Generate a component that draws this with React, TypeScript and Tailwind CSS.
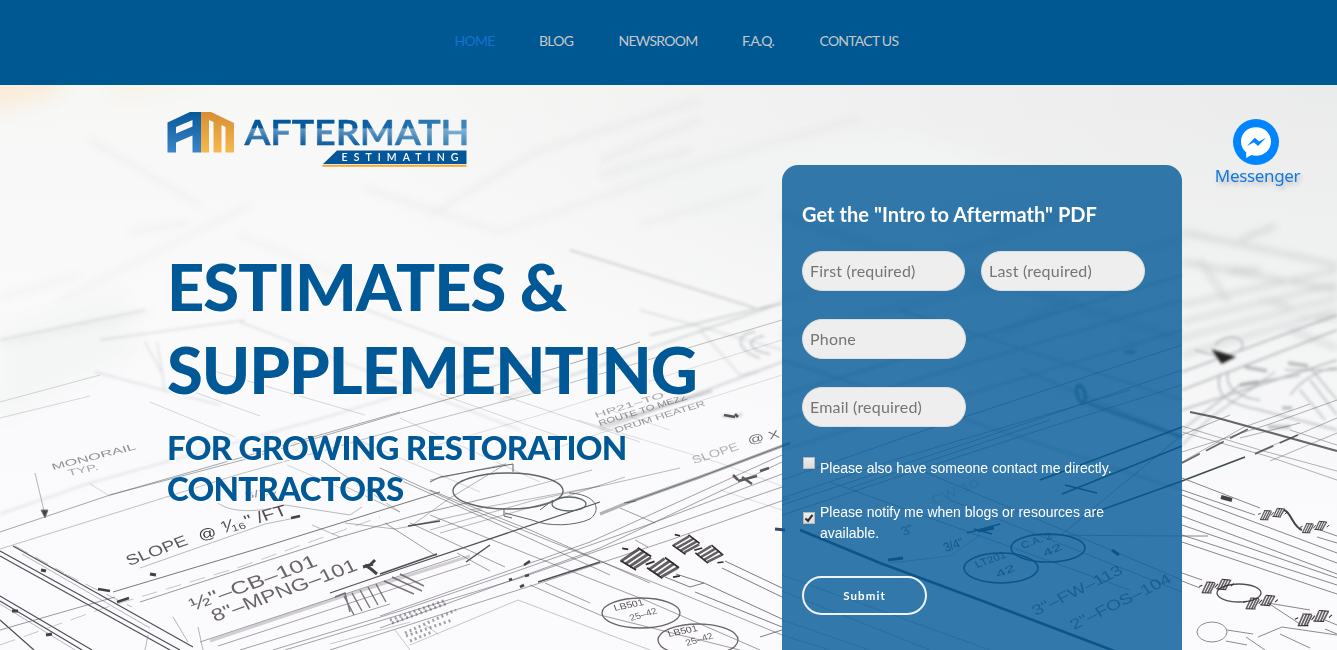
import React from "react";

const navItems = ["HOME", "BLOG", "NEWSROOM", "F.A.Q.", "CONTACT US"];
const navSpots = ["w-[39.5px]", "w-[34.5px]", "w-[78.5px]", "w-[32.5px]", "w-[81px]"];

function Label({ x, y, r, s, w, children, o = 0.6 }: { x: number; y: number; r: number; s: number; w: number; o?: number; children: string }) {
  return (
    <text
      transform={`translate(${x} ${y}) rotate(${r}) skewX(8)`}
      fontSize={s}
      textLength={w}
      lengthAdjust="spacingAndGlyphs"
      fill="#2b2429"
      opacity={o}
    >
      {children}
    </text>
  );
}

function Valve({ x, y, r = 24, k = 1 }: { x: number; y: number; r?: number; k?: number }) {
  return (
    <g transform={`translate(${x} ${y}) rotate(${r}) scale(${k})`} fill="none" stroke="#322c32">
      <path d="M-24 6L-14 -8M-20 7L-9 -8M-16 8L-5 -7M-12 8L-2 -5M0 5L9 -8M4 6L14 -8M8 7L18 -7M12 7L22 -5" strokeWidth="2.4" opacity=".75" />
      <path d="M-25 6L-10 9M-15 -9L-2 -6M-2 4L13 8M9 -9L23 -5M-27 -4L-22 -5M-4 2L2 -3M21 4L26 1" strokeWidth="1.5" />
    </g>
  );
}

function Blueprint() {
  return (
    <svg className="absolute inset-0 h-full w-full" viewBox="0 85 1337 565" preserveAspectRatio="none" fontFamily="'Liberation Sans', sans-serif" aria-hidden="true">
      <defs>
        <linearGradient id="paper" x1="0" y1="0" x2="0" y2="1">
          <stop offset="0" stopColor="#f7f7f6" />
          <stop offset=".4" stopColor="#fafafb" />
          <stop offset="1" stopColor="#fbfafd" />
        </linearGradient>
        <radialGradient id="shade" cx="1" cy="0" r=".75">
          <stop offset="0" stopColor="#dadddc" stopOpacity=".45" />
          <stop offset=".4" stopColor="#dadddc" stopOpacity=".3" />
          <stop offset="1" stopColor="#d9dddb" stopOpacity="0" />
        </radialGradient>
        <filter id="b12" x="-30%" y="-50%" width="160%" height="200%"><feGaussianBlur stdDeviation="10" /></filter>
        <filter id="b4" x="-10%" y="-10%" width="120%" height="120%"><feGaussianBlur stdDeviation="3.5" /></filter>
        <filter id="b2" x="-5%" y="-5%" width="110%" height="110%"><feGaussianBlur stdDeviation="1.4" /></filter>
        <filter id="b1" x="-5%" y="-5%" width="110%" height="110%"><feGaussianBlur stdDeviation=".7" /></filter>
      </defs>
      <rect y="85" width="1337" height="565" fill="url(#paper)" />
      <rect y="85" width="1337" height="565" fill="url(#shade)" />
      <g filter="url(#b12)">
        <path d="M-20 70H62V92L-20 114Z" fill="#f9ecd8" />
        <path d="M105 75H230L120 96Z" fill="#f7f1e4" />
        <path d="M0 330L120 290L140 350L0 420Z" fill="#f3f4f4" opacity=".8" />
        <path d="M600 170L900 130L1100 190L760 230Z" fill="#f2f3f3" />
      </g>

      <g filter="url(#b4)" fill="none" stroke="#858b8a" strokeWidth="3">
        <path d="M90 140L200 205M130 232L188 223M365 188L500 232M430 215L540 150L700 100M600 160L700 120M600 175L690 150" opacity=".12" />
        <path d="M0 298L80 275M0 345L150 312M60 300L250 205M240 235L400 300M500 232L680 170L860 118M640 225L760 190" opacity=".1" />
        <path d="M1182 232L1337 265M1240 240L1275 226M1182 262L1337 290M1182 305L1337 270M1200 260L1228 302" opacity=".36" />
        <path d="M1182 322L1337 284M1182 338L1337 298M1182 355L1337 310M1230 270H1260M1260 300L1290 306M1300 318H1337M1290 330L1337 348" opacity=".36" />
        <path d="M782 300L1080 215M782 335L1182 240M900 250L1182 340M782 215L1000 290M990 228L1100 205M1000 335L1070 300M1120 335L1135 350" opacity=".36" />
      </g>

      <g filter="url(#b2)" fill="none" stroke="#6e7878" strokeWidth="1.5">
        <path d="M570 250L755 308M650 335L782 303M500 400L782 303M600 430L782 362" opacity=".36" />
        <path d="M0 514L90 483L180 458L330 416L540 352M640 310L782 350M700 330L740 375L758 372M0 340L145 310M145 342L163 375M157 342L165 390M95 372L220 405M240 322L520 430M340 300L570 385M100 340L245 320" opacity=".22" />
        <path d="M755 332C735 333 735 350 760 358M764 336C746 338 746 350 770 354" opacity=".45" />
        <path d="M782 395L1182 275M782 420L1182 300M782 450L1182 330M782 360L1182 490M900 310L1182 400M1020 368L1180 437" opacity=".4" />
        <path d="M1182 410L1337 360M1182 390L1337 330M1182 372L1337 315M1182 430L1240 385L1300 375M1220 374C1215 395 1225 403 1260 410L1337 430M1228 372C1224 388 1240 398 1260 400" opacity=".5" />
        <path d="M1290 395C1310 370 1335 365 1345 370M1310 380L1337 415M1300 390L1325 420M1312 370L1337 400M1182 445L1210 418L1275 372M1195 350L1220 357M1215 345C1230 330 1250 340 1240 350M1285 370H1337" opacity=".45" />
        <path d="M1215 352L1232 357L1222 362Z" fill="#202020" stroke="#202020" strokeWidth="3" />
        <path d="M1245 367L1267 371M1288 363L1308 366M1240 385L1258 382M1282 408H1292M1268 427H1290" strokeWidth="3.5" opacity=".45" />
        <ellipse cx="1081" cy="394" rx="4" ry="9" stroke="#233" strokeWidth="2" transform="rotate(-15 1081 394)" opacity=".8" />
        <path d="M1087 403L1107 410L1182 437M1125 352H1135" stroke="#233" strokeWidth="2" opacity=".6" />
        <path d="M722 416L735 417L742 414M600 426L712 391" stroke="#444" strokeWidth="1.6" opacity=".4" />
      </g>

      <g filter="url(#b1)" fill="none" stroke="#5b6566" opacity=".85">
        <path d="M0 532L110 495L250 458L400 413L570 364L640 342" opacity=".65" />
        <path d="M0 549L240 474L400 429L550 389L782 320" opacity=".45" />
        <path d="M110 495L250 455L400 412" stroke="#3f494a" opacity=".55" />
        <path d="M0 418L90 396M0 402L100 375M150 402L235 437M175 385L260 416M210 370L365 415M90 484L110 496M287 465L350 492M360 441L480 492M400 418L540 482M440 394L575 442M475 386L640 442" opacity=".28" />
        <path d="M420 450L540 415L782 340M520 460L640 420L782 375M610 410L670 430M578 420L720 463L782 486M720 490L782 510" opacity=".22" />
        <path d="M35 473L45 515" opacity=".55" /><path d="M41 510L48 510L45 518Z" fill="#222" />
        <path d="M0 551L180 650M0 556L170 650M13 546L193 647M0 596L92 650M0 601L82 650M0 620L34 650" stroke="#30303a" strokeWidth="1.2" />
        <path d="M22 554L150 628M0 604L75 650" stroke="#30303a" opacity=".4" />
        <path d="M15 546L64 573M65 574L132 607" strokeDasharray="15 8" opacity=".5" />
        <path d="M113 592L270 545L350 520L440 492" stroke="#3a3a40" opacity=".8" />
        <path d="M0 630L115 597M140 602L260 563L340 537L420 514L500 495" stroke="#3a3a40" opacity=".6" />
        <path d="M0 645L110 606L240 567L380 517" strokeDasharray="16 9" opacity=".4" />
        <path d="M140 568L265 524L300 517M217 502C230 514 262 512 285 505L350 515M318 458L400 512M342 485L400 512M312 525L340 537M350 515L362 507" opacity=".5" />
        <path d="M98 589L110 591M117 602L129 598M291 518L300 516" strokeWidth="2.4" stroke="#222" />
        <path d="M150 574L156 575M41 570L46 571M12 611L18 611M46 635L52 634" strokeWidth="3" stroke="#222" />
        <path d="M173 617L188 642M198 627L203 650M148 635L145 650" opacity=".55" />
        <path d="M330 593L400 569L600 502" stroke="#353238" strokeWidth="1.3" />
        <path d="M600 514L627 503L700 477L790 443" stroke="#687072" strokeWidth="3" opacity=".6" />
        <path d="M627 503L700 477L790 443M624 503L636 501" stroke="#30383a" opacity=".7" />
        <path d="M200 642L330 599L460 556M218 646L350 603L470 564M240 650L390 604M273 650L400 611L520 570L650 524L782 474M285 650L520 578L660 529L782 487M330 650L540 583L670 540L790 498M380 628L600 548L782 462M380 616L590 542L782 455" stroke="#514a56" opacity=".6" />
        <path d="M210 641L335 599L470 556" stroke="#6c6670" strokeWidth="3" opacity=".35" />
        <path d="M345 523L395 529L411 526L482 510M411 526L450 498L506 464M430 480L506 464" opacity=".55" />
        <path d="M365 565L371 569L377 574M363 567L373 564M371 564L375 560" strokeWidth="3" stroke="#222" />
        <path d="M380 468L470 509L580 553L680 593L782 635M400 480L500 525L610 575M430 490L530 530L650 583M385 523L438 557M410 523L505 567M430 515L530 555L645 600L760 650M457 553L490 571M530 585L600 615L740 650M545 583L590 603M620 508L655 523M635 540L648 547" stroke="#3b363c" opacity=".55" />
        <path d="M500 495L592 470M430 530L535 500L610 484L680 468M440 533L550 502L625 477M470 510L600 486" stroke="#3b363c" opacity=".4" />
        <ellipse cx="508" cy="491" rx="55" ry="18" stroke="#414b4b" strokeWidth="1.4" />
        <ellipse cx="569" cy="504" rx="17" ry="7" stroke="#414b4b" strokeWidth="1.3" />
        <path d="M569 493C595 494 603 509 590 519C575 526 548 527 532 520L505 513M513 464V472M504 509V516L512 518M430 482L440 477L513 464M553 500L540 510" stroke="#414b4b" />
        <path d="M380 574L437 554M408 526L440 521M466 562L490 545M538 582L600 562" stroke="#30303a" strokeWidth="1.5" />
        <path d="M335 597L345 593L350 612M344 596L354 615M352 593L362 611M360 590L370 608M368 587L378 605M376 584L386 602M384 581L414 594M392 577L422 591M400 574L424 586" stroke="#3e383f" strokeWidth="1.4" opacity=".8" />
        <path d="M390 620L446 600M392 623L448 603M405 633L456 610M406 636L452 620M410 641L432 632" stroke="#3e383f" strokeWidth="3" strokeDasharray="2 3" opacity=".55" />
        <path d="M330 644L410 622M395 630L410 650M425 625L438 634M518 600L610 635L690 665M518 600L410 645" opacity=".4" />
        <path d="M509 580L512 579M520 587L524 585M524 565L530 561M525 576L529 575" stroke="#29242a" strokeWidth="2.6" />
        <path d="M725 561L782 588M722 568L782 597M665 577L690 587L704 583L676 574M704 583L782 619M695 592L782 627M760 637L782 630" stroke="#433f46" opacity=".8" />
        <path d="M724 415L735 417M735 414L738 417M760 471L769 468M733 475L738 480M738 481L757 476M742 477L752 484" stroke="#222" strokeWidth="2.6" opacity=".85" />
        <ellipse cx="641" cy="613" rx="39" ry="15" stroke="#514751" strokeWidth="1.3" />
        <ellipse cx="698" cy="640" rx="40" ry="16" stroke="#514751" strokeWidth="1.3" />

        <path d="M800 530L880 563L980 600L1117 652" stroke="#162a3c" strokeWidth="2.6" />
        <path d="M782 505L1000 432L1182 370M782 515L1040 430L1182 385M782 480L940 425L1182 345M850 488L1050 420M782 498L900 458L1130 390M830 482L1130 590M920 470L1182 580M950 500L1182 592M1030 535L1182 536M1060 536L1182 435L1230 415" stroke="#344e5d" opacity=".5" />
        <path d="M782 575L990 650M782 591L930 650M782 620L870 650M890 563L950 556L980 535M782 635L830 650" stroke="#344e5d" opacity=".4" />
        <path d="M1040 480L1182 427M1062 494L1182 446M1065 485L1097 493M1090 514L1182 481L1245 457" stroke="#1f2d33" strokeWidth="1.6" />
        <path d="M888 560L903 558M1112 550L1119 555M775 529L785 530M978 531L994 528" stroke="#182c3c" strokeWidth="3" />
        <path d="M967 533L1000 524M974 529L992 534" stroke="#182c3c" strokeWidth="1.6" />
        <ellipse cx="1048" cy="548" rx="37" ry="14" stroke="#102c43" strokeWidth="1.6" />
        <ellipse cx="1001" cy="568" rx="37" ry="15" stroke="#102c43" strokeWidth="1.6" />

        <path d="M1190 412L1214 417L1337 451" stroke="#292d2f" strokeWidth="2.2" opacity=".85" />
        <path d="M1182 432L1270 457L1337 480M1182 426L1260 450L1337 471M1182 452L1270 424L1337 400M1182 462L1244 427L1310 404M1255 453L1337 418M1270 461L1337 433M1290 430L1337 445M1240 438L1300 423" stroke="#4c5152" opacity=".5" />
        <path d="M1182 463L1250 428M1255 454L1300 434" stroke="#222" strokeWidth="1.7" strokeDasharray="20 7" opacity=".8" />
        <path d="M1182 478L1260 508M1182 490L1255 515M1182 495L1337 553M1182 505L1337 563M1182 516L1337 574M1182 525L1337 578M1182 535L1337 585M1182 542L1337 594M1182 536H1208M1182 573L1202 580M1182 581L1200 588M1325 620L1337 625M1325 629L1337 634M1320 530L1337 536M1317 537L1337 543M1268 603L1310 610M1268 603L1300 624" stroke="#4a424c" opacity=".75" />
        <path d="M1221 497L1232 500" stroke="#222" strokeWidth="4" />
        <path d="M1284 510C1291 512 1293 527 1302 530" stroke="#222" strokeWidth="2" />
        <ellipse cx="1239" cy="593" rx="22" ry="9" stroke="#333" strokeWidth="1.3" />
        <ellipse cx="1212" cy="632" rx="15" ry="10" stroke="#777" />
        <path d="M1227 630L1253 634M1226 641L1247 645M1258 637L1282 627L1337 635M1246 637L1265 650M1280 634L1310 648" stroke="#777" />
      </g>
      <g filter="url(#b1)">
        <g transform="translate(1273 514) rotate(-10) scale(.55)"><Valve x={0} y={0} r={0} /></g>
        <g transform="translate(1315 527) rotate(-10) scale(.55)"><Valve x={0} y={0} r={0} /></g>
        <Valve x={699} y={550} k={1.05} />
        <Valve x={651} y={564} r={20} k={1.2} />
        <Valve x={1217} y={586} r={-10} k={0.65} />
        <Valve x={1261} y={602} r={-10} k={0.65} />
        <Valve x={1314} y={618} r={-12} k={0.7} />
        <Label x={53} y={470} r={-14} s={9} w={86} o={0.5}>MONORAIL</Label>
        <Label x={69} y={476} r={-12} s={9} w={31} o={0.4}>TYP.</Label>
        <Label x={129} y={566} r={-20} s={15} w={64} o={0.75}>SLOPE</Label>
        <Label x={200} y={540} r={-12} s={14} w={18} o={0.9}>@</Label>
        <Label x={224} y={533} r={-16} s={16} w={67} o={0.8}>⅟₁₆" /FT</Label>
        <Label x={193} y={611} r={-20} s={18} w={134} o={0.7}>½"–CB–101</Label>
        <Label x={215} y={622} r={-20} s={18} w={153} o={0.7}>8"–MPNG–101</Label>
        <Label x={596} y={418} r={-17} s={8} w={72} o={0.4}>HP21–TO</Label>
        <Label x={600} y={426} r={-17} s={8} w={92} o={0.5}>ROUTE TO MEZZ</Label>
        <Label x={616} y={433} r={-17} s={8} w={94} o={0.45}>DRUM HEATER</Label>
        <Label x={694} y={464} r={-18} s={11} w={48} o={0.35}>SLOPE</Label>
        <Label x={749} y={444} r={-12} s={11} w={32} o={0.65}>@ X</Label>
        <Label x={246} y={499} r={-10} s={10} w={32} o={0.5}>3/16</Label>
        <Label x={615} y={611} r={-12} s={9} w={30} o={0.8}>LB501</Label>
        <Label x={631} y={621} r={-16} s={9} w={28} o={0.7}>25–42</Label>
        <Label x={669} y={637} r={-12} s={9} w={30} o={0.8}>LB501</Label>
        <Label x={687} y={646} r={-16} s={9} w={28} o={0.7}>25–42</Label>
        <Label x={1023} y={549} r={-20} s={10} w={32} o={0.75}>C.A. 2</Label>
        <Label x={1045} y={557} r={-24} s={10} w={20} o={0.75}>42</Label>
        <Label x={977} y={568} r={-20} s={10} w={32} o={0.75}>LT201</Label>
        <Label x={998} y={578} r={-24} s={10} w={20} o={0.75}>42</Label>
        <Label x={1036} y={616} r={-26} s={15} w={98} o={0.6}>3"–FW–113</Label>
        <Label x={1074} y={630} r={-26} s={15} w={110} o={0.6}>2"–FOS–104</Label>
        <Label x={946} y={552} r={-18} s={13} w={20} o={0.75}>3/4"</Label>
        <Label x={904} y={536} r={-22} s={13} w={12} o={0.6}>3"</Label>
        <Label x={934} y={505} r={-22} s={12} w={50} o={0.2}>CW-10</Label>
      </g>
    </svg>
  );
}

function Logo() {
  return (
    <svg className="ml-[-1px] block h-[58px] w-[304px]" viewBox="166 110 304 58" role="img" aria-label="Aftermath Estimating">
      <defs>
        <linearGradient id="mark" x1="0" y1="0" x2="0" y2="1"><stop stopColor="#07589a" /><stop offset="1" stopColor="#3c85c8" /></linearGradient>
        <linearGradient id="gold" x1="0" y1="0" x2="0" y2="1"><stop stopColor="#d88d35" /><stop offset="1" stopColor="#f6b94b" /></linearGradient>
        <linearGradient id="word" gradientUnits="userSpaceOnUse" x1="244" y1="120" x2="467" y2="120"><stop stopColor="#04569a" /><stop offset=".5" stopColor="#085ba0" /><stop offset="1" stopColor="#3c87bb" /></linearGradient>
        <linearGradient id="shine" gradientUnits="userSpaceOnUse" x1="0" y1="120" x2="0" y2="146"><stop stopColor="#fff" stopOpacity="0" /><stop offset=".31" stopColor="#fff" stopOpacity="0" /><stop offset=".34" stopColor="#fff" stopOpacity=".36" /><stop offset="1" stopColor="#fff" stopOpacity="0" /></linearGradient>
      </defs>
      <path fill="url(#mark)" fillRule="evenodd" d="M167.500 122.500L190 112H201V152.500H192.500V135.500L176 142.500V152.500H167.500ZM176 127V133.500L192.500 126.500V120Z" />
      <path fill="url(#gold)" d="M201 112H211L234 123V152.500H225.500V127L221.500 125V152.500H213.500V122L209 120V152.500H201Z" />
      {["url(#word)", "url(#shine)"].map((fill) => (
        <text key={fill} x="244.500" y="145" fontFamily="Lato, sans-serif" fontSize="35" fontWeight="600" textLength="225" lengthAdjust="spacingAndGlyphs" fill={fill} stroke={fill} strokeWidth=".5">AFTERMATH</text>
      ))}
      <path d="M337 150.500H466.500V164H323Z" fill="#04569a" />
      <path d="M323 164.800H466.500V166.800H322Z" fill="#f5a52f" />
      <text x="341.500" y="161.200" fontFamily="Lato, sans-serif" fontSize="10.500" fontWeight="600" fill="#fff" textLength="117">ESTIMATING</text>
    </svg>
  );
}

function Field({ label, className }: { label: string; className: string }) {
  return (
    <input
      aria-label={label}
      placeholder={label}
      className={`h-10 rounded-[20px] border border-[#ddd] bg-[#eee] px-[7px] pb-[2px] font-[Lato,sans-serif] text-[16px] tracking-[0.2px] text-[#555] placeholder:text-[#757575] ${className}`}
    />
  );
}

export default function App() {
  return (
    <div className="h-[650px] w-full overflow-hidden bg-white font-[Lato,sans-serif]">
      <header className="flex h-[85px] justify-start bg-[#005893] pl-[454.5px] pt-[31px]">
        <nav className="flex h-5 gap-[45px] whitespace-nowrap text-[14px] leading-5 tracking-[-0.75px]">
          {navItems.map((item, i) => (
            <a key={item} className={`${navSpots[i]} ${i === 0 ? "text-[#1372cf]" : "text-[#c5c8ca]"}`}>{item}</a>
          ))}
        </nav>
      </header>
      <main className="relative flex h-[565px]">
        <Blueprint />
        <section className="relative w-[782px] pl-[167px] pt-[25px] text-[#005896]">
          <Logo />
          <h1 className="mt-[77px] whitespace-nowrap text-[65px] font-black leading-[83px] tracking-[-1px] [text-shadow:1px_2px_1px_white]">
            ESTIMATES &amp;<br />SUPPLEMENTING
          </h1>
          <h2 className="mt-[16px] whitespace-nowrap text-[33px] font-black leading-[41px] tracking-[-0.75px] [text-shadow:1px_2px_1px_white]">
            FOR GROWING RESTORATION<br />CONTRACTORS
          </h2>
        </section>
        <form className="relative mt-20 h-[485px] w-[400px] rounded-t-[16px] bg-[#005896]/80 px-5 pt-[35px] text-white">
          <h3 className="h-[51px] whitespace-nowrap text-[20px] font-bold leading-[28px] tracking-[0.05px]">Get the "Intro to Aftermath" PDF</h3>
          <div className="flex gap-4">
            <Field label="First (required)" className="w-[163px]" />
            <Field label="Last (required)" className="w-[164px]" />
          </div>
          <div className="mt-7 flex flex-col gap-7">
            <Field label="Phone" className="w-[164px]" />
            <Field label="Email (required)" className="w-[164px]" />
          </div>
          <div className="mt-[31px] flex gap-[5px] pl-px font-['Liberation_Sans',sans-serif] text-[14px] leading-[21px]">
            <span className="mt-[-1px] h-3 w-3 shrink-0 border border-[#b7b7b7] bg-linear-to-b from-[#eee] to-[#dcdcdc]" />
            <span className="whitespace-nowrap">Please also have someone contact me directly.</span>
          </div>
          <div className="mt-[23px] flex gap-[5px] pl-px font-['Liberation_Sans',sans-serif] text-[14px] leading-[21px]">
            <span className="mt-[10px] h-3 w-3 shrink-0 border border-[#b7b7b7] bg-linear-to-b from-[#eee] to-[#dcdcdc]">
              <svg viewBox="0 0 10 10" className="block h-full w-full"><path d="M1.500 5.500L4 7.800L8.500 1.800" fill="none" stroke="#333" strokeWidth="2.200" /></svg>
            </span>
            <span className="whitespace-nowrap">Please notify me when blogs or resources are<br />available.</span>
          </div>
          <button type="button" className="mt-[32px] block h-[39px] w-[125px] rounded-[20px] border-2 border-[#eef3f7] text-[11.5px] font-bold tracking-[1.1px]">Submit</button>
        </form>
        <aside className="relative flex flex-1 flex-col items-center pr-[7px] pt-[34px]">
          <svg viewBox="0 0 46 46" className="h-[46px] w-[46px]">
            <circle cx="23" cy="23" r="23" fill="#0084ff" />
            <path d="M23 8.200C14.500 8.200 8 14.200 8 22.500C8 27 10 30.800 13.200 33.500V39L18.500 36.100C20 36.500 21.500 36.700 23 36.700C31.500 36.700 38 30.700 38 22.500S31.500 8.200 23 8.200Z" fill="#fff" />
            <path d="M14 27L21.800 18.800L26 22.600L33 18.800L25 27L21 23.200Z" fill="#0084ff" />
          </svg>
          <span className="ml-[3px] mt-[-1px] font-['Noto_Sans',sans-serif] text-[17px] leading-6 tracking-[-0.35px] text-[#1479dd] [text-shadow:2px_3px_4px_#bbb]">Messenger</span>
        </aside>
      </main>
    </div>
  );
}
